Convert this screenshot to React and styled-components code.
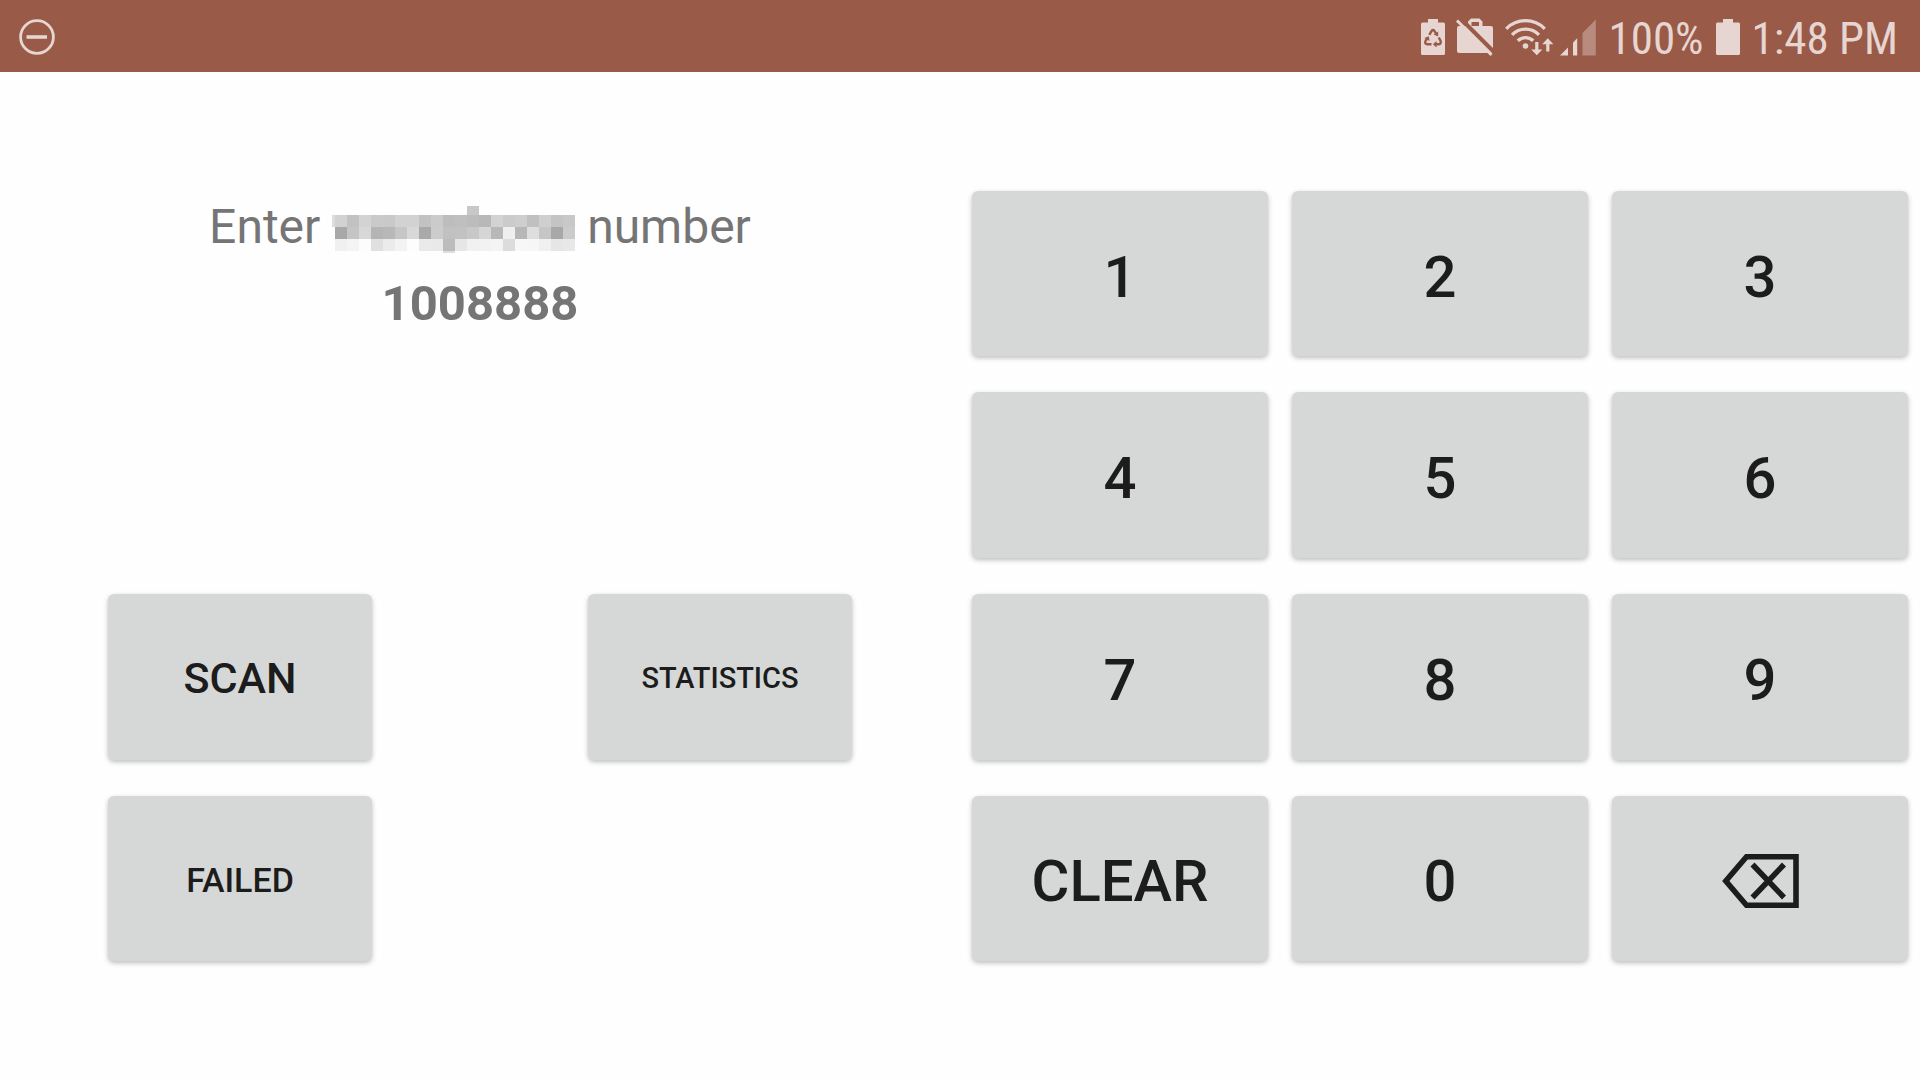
import React, { useState } from "react";
import styled, { createGlobalStyle } from "styled-components";

const GlobalStyle = createGlobalStyle`
  * { box-sizing: border-box; }
  body {
    margin: 0;
    background: #fefefe;
    font-family: Roboto, "Noto Sans", sans-serif;
  }
`;

const Screen = styled.div`
  min-height: 100vh;
  display: flex;
  flex-direction: column;
`;

const StatusBar = styled.header`
  height: 72px;
  flex: none;
  display: flex;
  align-items: center;
  justify-content: space-between;
  padding: 2px 22px 0 19px;
  background: #995a48;
  color: #e6d5d0;
`;

const StatusGroup = styled.div`
  display: flex;
  align-items: center;
  gap: ${(p) => p.$gap}px;
`;

const StatusText = styled.span`
  font-family: "Roboto Condensed", "Liberation Sans Narrow", Roboto, sans-serif;
  font-size: 45px;
  line-height: 60px;
  padding-top: 4px;
  white-space: nowrap;
`;

const Glyph = styled.svg`
  display: block;
  flex: none;
  overflow: visible;
`;

const Main = styled.main`
  flex: 1;
  display: grid;
  grid-template-columns: 1fr 1fr;
`;

const Panel = styled.section`
  display: grid;
  grid-template-columns: repeat(${(p) => p.$columns}, 1fr);
  grid-template-rows: 1fr repeat(4, 2fr) 1fr;
`;

const Prompt = styled.div`
  grid-column: 1 / -1;
  grid-row: 2 / span 2;
  display: flex;
  flex-direction: column;
  align-items: center;
  padding-top: 15px;
  font-size: 48px;
  line-height: 77px;
  color: #757575;
`;

const Entry = styled.output`
  font-size: 49px;
  font-weight: 700;
`;

const Mosaic = styled.svg`
  display: inline-block;
  vertical-align: -10px;
`;

const Key = styled.button`
  grid-column: ${(p) => p.$column};
  grid-row: ${(p) => p.$row + 1};
  justify-self: center;
  width: ${(p) => (p.$action ? "55%" : "calc(100% - 24px)")};
  margin: 18px 0;
  padding: ${(p) => (p.$action ? 4 : 6)}px 0 0;
  display: flex;
  align-items: center;
  justify-content: center;
  border: 0;
  border-radius: 6px;
  background: #d6d8d7;
  box-shadow: 0 2px 5px rgba(0, 0, 0, 0.26);
  color: #1c1c1c;
  font-family: inherit;
  font-weight: 500;
  font-size: ${(p) => p.$size || 58}px;
  line-height: 1;
  cursor: pointer;
`;

const rows = [
  "d2 c2 d3 ca c9 d2 d2 c2 cb bd bf bc b8 d3 cb ce c0 cf c4 c8",
  "a8 c5 d8 b5 b8 c6 d8 a9 cc c1 c2 c8 d6 b8 ef b7 de c6 a8 cb",
  "f0 f4 fc e0 eb f3 fd ea e9 bc e6 f1 f2 f4 dc f7 f6 f0 e6 e8",
].map((r) => r.split(" "));

function MaskedWord() {
  return (
    <Mosaic width="243" height="47" viewBox="0 0 243 47" shapeRendering="crispEdges" aria-hidden="true">
      <rect x="0" y="9" width="3" height="12" fill="#dddddd" />
      <rect x="135" y="0" width="12" height="9" fill="#c8c8c8" />
      <rect x="111" y="45" width="12" height="2" fill="#dedede" />
      {rows.map((row, y) =>
        row.map((c, x) => (
          <rect key={`${x}-${y}`} x={3 + x * 12} y={9 + y * 12} width="12" height="12" fill={`#${c}${c}${c}`} />
        ))
      )}
    </Mosaic>
  );
}

function DoNotDisturbIcon() {
  return (
    <Glyph width="36" height="36" viewBox="0 0 36 36" fill="none" stroke="currentColor" aria-hidden="true">
      <circle cx="18" cy="18" r="16.4" strokeWidth="2.8" />
      <path d="M7.500 18h20.500" strokeWidth="3.600" />
    </Glyph>
  );
}

const batteryBody =
  "M7 0h10v3.6h5.5a1.5 1.5 0 0 1 1.5 1.5v29.4a1.5 1.5 0 0 1-1.5 1.5h-21a1.5 1.5 0 0 1-1.5-1.5V5.1a1.5 1.5 0 0 1 1.5-1.5H7z";

function BatteryIcon() {
  return (
    <Glyph width="24" height="36" viewBox="0 0 24 36" aria-hidden="true">
      <path d={batteryBody} fill="currentColor" />
    </Glyph>
  );
}

function RecycleBatteryIcon() {
  return (
    <Glyph width="24" height="36" viewBox="0 0 24 36" aria-hidden="true">
      <path d={batteryBody} fill="currentColor" />
      <g fill="none" stroke="#995a48" strokeWidth="2.4">
        <path d="M8.300 15.800l2.300-3.900q1.400-1.700 2.800 0l1.600 2.700" />
        <path d="M17.800 18.500l1.700 3.200q1 3.200-1.700 3.600h-3.300" />
        <path d="M10.500 25.300H6.500q-3.200-.4-2-3.200l1.600-2.700" />
      </g>
      <g fill="#995a48">
        <path d="M17.200 12.600v4.900l-4.500-2.100z" />
        <path d="M15.500 22v6.500l-3.600-3.200z" />
        <path d="M3.300 19.100l4.500-1.800.8 4.700z" />
      </g>
    </Glyph>
  );
}

function WorkOffIcon() {
  return (
    <Glyph width="38" height="38" viewBox="0 0 38 38" aria-hidden="true">
      <path
        fill="currentColor"
        fillRule="evenodd"
        d="M12 8V3.500L15 .5h8.500l3 3V8H35a2 2 0 0 1 2 2v23a2 2 0 0 1-2 2H3a2 2 0 0 1-2-2V10a2 2 0 0 1 2-2zM15.500 8H23V4h-7.500z"
      />
      <path d="M4.500.5l34 34" stroke="#995a48" strokeWidth="4" />
      <path d="M1 2.500l34.500 34.500" stroke="currentColor" strokeWidth="3" />
    </Glyph>
  );
}

function WifiIcon() {
  return (
    <Glyph width="44" height="37" viewBox="0 0 44 37" aria-hidden="true">
      <g fill="none" stroke="currentColor" strokeWidth="3.300">
        <path d="M1.200 9.800a27 27 0 0 1 38.600 0" />
        <path d="M7 15.800a19 19 0 0 1 27 0" />
        <path d="M12.800 21.800a11 11 0 0 1 15.400 0" />
      </g>
      <circle cx="20.500" cy="27" r="2.800" fill="currentColor" />
      <g fill="currentColor">
        <path d="M30.200 23h3.200v7.500h4L31.800 36.200 26.200 30.500h4z" />
        <path d="M41.200 32.500h3.200V25.200h4L42.800 19.200 37.200 25.200h4z" />
      </g>
    </Glyph>
  );
}

function SignalIcon() {
  return (
    <Glyph width="36" height="37" viewBox="0 0 36 37" fill="currentColor" aria-hidden="true">
      <path d="M0 36.500l8-8v8z" />
      <path d="M13 36.500V23.500l4.200-4.200v17.200z" />
      <path d="M22.500 36.500V14L35.800.5v36z" opacity="0.4" />
    </Glyph>
  );
}

function BackspaceIcon() {
  return (
    <Glyph width="77" height="54" viewBox="0 0 77 54" fill="none" stroke="currentColor" strokeWidth="5.600" aria-hidden="true">
      <path d="M24.500 2.800H74v48.400H24.500L3.800 27z" />
      <path d="M30.500 10.500l31.500 33M62 10.500l-31.500 33" />
    </Glyph>
  );
}

const actions = [
  { label: "SCAN", column: 1, row: 3, size: 43 },
  { label: "STATISTICS", column: 2, row: 3, size: 29 },
  { label: "FAILED", column: 1, row: 4, size: 34 },
];

const digits = ["1", "2", "3", "4", "5", "6", "7", "8", "9"];

export default function App() {
  const [value, setValue] = useState("1008888");
  const add = (d) => setValue((v) => v + d);

  return (
    <Screen>
      <GlobalStyle />
      <StatusBar>
        <DoNotDisturbIcon />
        <StatusGroup $gap={12}>
          <StatusGroup $gap={11}>
            <RecycleBatteryIcon />
            <WorkOffIcon />
            <WifiIcon />
            <SignalIcon />
          </StatusGroup>
          <StatusText>100%</StatusText>
          <BatteryIcon />
          <StatusText>1:48 PM</StatusText>
        </StatusGroup>
      </StatusBar>
      <Main>
        <Panel $columns={2}>
          <Prompt>
            <label htmlFor="entry">
              Enter <MaskedWord /> number
            </label>
            <Entry id="entry">{value}</Entry>
          </Prompt>
          {actions.map((a) => (
            <Key key={a.label} type="button" $action $column={a.column} $row={a.row} $size={a.size}>
              {a.label}
            </Key>
          ))}
        </Panel>
        <Panel $columns={3}>
          {digits.map((d, i) => (
            <Key key={d} type="button" $column={(i % 3) + 1} $row={Math.floor(i / 3) + 1} onClick={() => add(d)}>
              {d}
            </Key>
          ))}
          <Key type="button" $column={1} $row={4} onClick={() => setValue("")}>
            CLEAR
          </Key>
          <Key type="button" $column={2} $row={4} onClick={() => add("0")}>
            0
          </Key>
          <Key type="button" $column={3} $row={4} aria-label="Backspace" onClick={() => setValue((v) => v.slice(0, -1))}>
            <BackspaceIcon />
          </Key>
        </Panel>
      </Main>
    </Screen>
  );
}
